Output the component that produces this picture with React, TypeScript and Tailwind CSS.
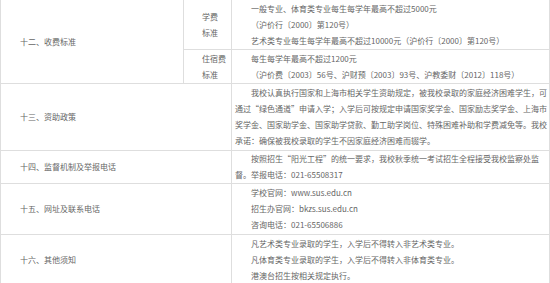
const feeRows = [
  {
    label: ["学费", "标准"],
    lines: [
      "一般专业、体育类专业每生每学年最高不超过5000元",
      "（沪价行〔2000〕第120号）",
      "艺术类专业每生每学年最高不超过10000元（沪价行〔2000〕第120号）",
    ],
    h: "h-[50px]",
  },
  {
    label: ["住宿费", "标准"],
    lines: [
      "每生每学年最高不超过1200元",
      "（沪价费〔2003〕56号、沪财预〔2003〕93号、沪教委财〔2012〕118号）",
    ],
    h: "h-[33px]",
  },
];

const rows = [
  {
    title: "十三、资助政策",
    h: "h-[67px]",
    para: [
      "我校认真执行国家和上海市相关学生资助规定，被我校录取的家庭经济困难学生，可",
      "通过“绿色通道”申请入学；入学后可按规定申请国家奖学金、国家励志奖学金、上海市",
      "奖学金、国家助学金、国家助学贷款、勤工助学岗位、特殊困难补助和学费减免等。我校",
      "承诺：确保被我校录取的学生不因家庭经济困难而辍学。",
    ],
  },
  {
    title: "十四、监督机制及举报电话",
    h: "h-[33px]",
    para: [
      "按照招生“阳光工程”的统一要求，我校秋季统一考试招生全程接受我校监察处监",
      "督。举报电话：021-65508317",
    ],
  },
  {
    title: "十五、网址及联系电话",
    h: "h-[51px]",
    lines: ["学校官网：www.sus.edu.cn", "招生办官网：bkzs.sus.edu.cn", "咨询电话：021-65506886"],
  },
  {
    title: "十六、其他须知",
    h: "h-[49px]",
    lines: [
      "凡艺术类专业录取的学生，入学后不得转入非艺术类专业。",
      "凡体育类专业录取的学生，入学后不得转入非体育类专业。",
      "港澳台招生按相关规定执行。",
    ],
  },
];

function Lines({ lines }: { lines: string[] }) {
  return (
    <div className="pl-[3px] flex flex-col justify-center">
      {lines.map((l) => (
        <p key={l} className="indent-[16px] whitespace-nowrap">
          {l}
        </p>
      ))}
    </div>
  );
}

export default function App() {
  return (
    <div className="w-[550px] h-[283px] bg-white overflow-hidden">
      <div
        className="w-[550px] border-x border-b border-[#dedede] text-[8px] leading-[16px] text-[#666]"
        style={{ fontFamily: '"Noto Sans CJK SC", "Noto Sans", sans-serif' }}
      >
        {/* 收费标准 */}
        <div className="flex border-b border-[#dedede]">
          <div className="w-[183px] shrink-0 border-r border-[#dedede] pl-[19px] flex items-center">
            十二、收费标准
          </div>
          <div className="flex-1 flex flex-col">
            {feeRows.map((r, i) => (
              <div
                key={i}
                className={`flex ${r.h} ${i === 0 ? "border-b border-[#dedede]" : ""}`}
              >
                <div className="w-[48px] shrink-0 border-r border-[#dedede] pl-[18px] flex flex-col justify-center">
                  {r.label.map((t) => (
                    <span key={t}>{t}</span>
                  ))}
                </div>
                <div className="flex-1 flex">
                  <Lines lines={r.lines} />
                </div>
              </div>
            ))}
          </div>
        </div>

        {rows.map((r, i) => (
          <div
            key={r.title}
            className={`flex ${r.h} ${i < rows.length - 1 ? "border-b border-[#dedede]" : ""}`}
          >
            <div className="w-[231px] shrink-0 border-r border-[#dedede] pl-[19px] flex items-center">
              {r.title}
            </div>
            <div className="flex-1 flex">
              {r.para ? (
                <div className="pl-[3px] flex items-center">
                  <p className="indent-[16px] whitespace-nowrap">
                    {r.para.map((l, k) => (
                      <span key={k}>
                        {l}
                        {k < r.para.length - 1 && <br />}
                      </span>
                    ))}
                  </p>
                </div>
              ) : (
                <Lines lines={r.lines ?? []} />
              )}
            </div>
          </div>
        ))}
      </div>
    </div>
  );
}
